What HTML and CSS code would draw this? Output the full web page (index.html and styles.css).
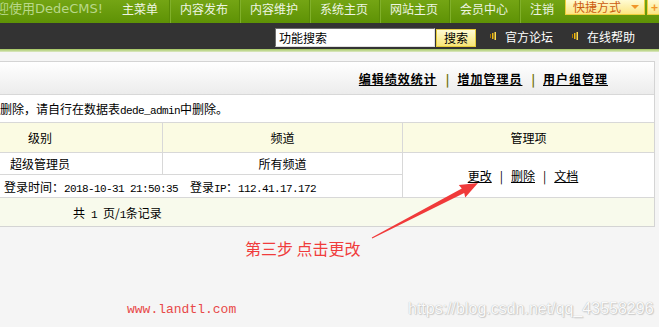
FILE: index.html
```html
<!DOCTYPE html>
<html lang="zh-CN">
<head>
    <meta charset="UTF-8">
    <title>DedeCMS 管理员</title>
    <link rel="stylesheet" href="styles.css">
</head>
<body>
    <div class="topbar">
        <div class="welcome">欢迎使用DedeCMS!</div>
        <ul class="menu">
            <li>主菜单</li>
            <li>内容发布</li>
            <li>内容维护</li>
            <li>系统主页</li>
            <li>网站主页</li>
            <li>会员中心</li>
            <li>注销</li>
        </ul>
        <div class="quick">快捷方式<span class="caret"></span></div>
        <div class="quick plus">+</div>
    </div>
    <div class="toolbar">
        <input class="search-input" type="text" value="功能搜索">
        <button class="search-btn">搜索</button>
        <a class="tool first">
            <svg width="6" height="8" viewBox="0 0 6 8"><rect x="0" y="2" width="1" height="4" fill="#b07a00"/><rect x="2" y="1" width="1.5" height="6" fill="#f0b90c"/><rect x="4.5" y="0" width="1.5" height="8" fill="#ffd94a"/></svg>
            官方论坛
        </a>
        <a class="tool">
            <svg width="6" height="8" viewBox="0 0 6 8"><rect x="0" y="2" width="1" height="4" fill="#b07a00"/><rect x="2" y="1" width="1.5" height="6" fill="#f0b90c"/><rect x="4.5" y="0" width="1.5" height="8" fill="#ffd94a"/></svg>
            在线帮助
        </a>
    </div>
    <div class="stripe"></div>

    <div class="panel">
        <div class="panel-head">
            <a class="head-link">编辑绩效统计</a>
            <span class="head-sep">|</span>
            <a class="head-link">增加管理员</a>
            <span class="head-sep">|</span>
            <a class="head-link">用户组管理</a>
        </div>
        <div class="notice">删除，请自行在数据表<span class="mono">dede_admin</span>中删除。</div>
        <table class="list">
            <colgroup>
                <col class="c1">
                <col class="c2">
                <col class="c3">
            </colgroup>
            <tr class="head-row">
                <td>级别</td>
                <td class="bl">频道</td>
                <td class="bl">管理项</td>
            </tr>
            <tr class="row1">
                <td>超级管理员</td>
                <td class="bl">所有频道</td>
                <td class="bl ops" rowspan="2">
                    <a>更改</a><span class="op-sep">|</span><a>删除</a><span class="op-sep">|</span><a>文档</a>
                </td>
            </tr>
            <tr class="row2">
                <td colspan="2">登录时间：<span class="mono">2018-10-31 21:50:35  </span>登录<span class="mono">IP</span>：<span class="mono">112.41.17.172</span></td>
            </tr>
            <tr class="foot-row">
                <td colspan="3">共<span class="mono"> 1 </span>页/<span class="mono">1</span>条记录</td>
            </tr>
        </table>
    </div>

    <svg class="arrow" width="659" height="327" viewBox="0 0 659 327">
        <polygon points="371.8,237.6 461.8,188.6 458.8,185.1 478,183 465.2,197.5 464.2,193 372.2,238.4" fill="#f03a3a"/>
    </svg>
    <div class="note">第三步 点击更改</div>
    <div class="site">www.landtl.com</div>
    <div class="mark">https://blog.csdn.net/qq_43558296</div>
</body>
</html>
```

FILE: styles.css
```css
body {
    margin: 0;
    background: #f5f5f5;
    font-family: "Noto Sans CJK SC", sans-serif;
    font-size: 12px;
    color: #000;
    position: relative;
    height: 327px;
    overflow: hidden;
}
.mono {
    font-family: "Liberation Mono", monospace;
    font-size: 11px;
    letter-spacing: -0.6px;
    white-space: pre;
}

/* top green menu */
.topbar {
    display: flex;
    height: 23px;
    background: linear-gradient(#74a514, #5e9205);
    white-space: nowrap;
    overflow: hidden;
}
.welcome {
    flex: none;
    width: 129px;
    margin-left: -17px;
    font-family: "DejaVu Sans", "Noto Sans CJK SC", sans-serif;
    font-size: 13px;
    line-height: 17px;
    color: #b9d88a;
}
.menu {
    display: flex;
    list-style: none;
    margin: 0;
    padding: 0;
}
.menu li {
    padding: 0 11px 0 10px;
    line-height: 17px;
    color: #eef5e2;
    border-left: 1px solid #5a8b06;
    box-shadow: inset 1px 0 #80b02a;
}
.menu li:first-child {
    border-left: none;
    box-shadow: none;
}
.quick {
    flex: none;
    display: flex;
    align-items: center;
    width: 71px;
    height: 14px;
    padding-left: 7px;
    border: 1px solid #efcf3c;
    border-top: none;
    background: linear-gradient(#fffbd3, #fbe582);
    color: #cc5c10;
    line-height: 14px;
}
.caret {
    margin-left: 10px;
    border-left: 4px solid transparent;
    border-right: 4px solid transparent;
    border-top: 4px solid #f0962a;
}
.plus {
    width: 20px;
    margin-left: 2px;
    padding-left: 3px;
    font-weight: bold;
    color: #f0962a;
}

/* dark search bar */
.toolbar {
    display: flex;
    align-items: flex-start;
    height: 26px;
    padding: 0 0 0 275px;
    background: #333333;
    white-space: nowrap;
}
.search-input {
    box-sizing: border-box;
    width: 160px;
    height: 19px;
    margin: 5px 0 0 0;
    padding: 0 3px;
    border: 1px solid #9a9a9a;
    border-color: #6f6f6f #e0e0e0 #e0e0e0 #6f6f6f;
    font-family: "Noto Sans CJK SC", sans-serif;
    font-size: 12px;
    color: #000;
    background: #fff;
}
.search-btn {
    box-sizing: border-box;
    width: 40px;
    height: 18px;
    margin: 6px 0 0 1px;
    padding: 0;
    border: 1px solid #e6cc3a;
    background: linear-gradient(#fffbd4, #f7e577);
    font-family: "Noto Sans CJK SC", sans-serif;
    font-size: 12px;
    line-height: 16px;
    color: #000;
}
.tool {
    display: flex;
    align-items: center;
    gap: 9px;
    height: 26px;
    margin-left: 19px;
    color: #fff;
}
.tool.first {
    margin-left: 14px;
}
.stripe {
    height: 3px;
    background: linear-gradient(#a1c55c, #dde9c4);
}

/* admin panel */
.panel {
    margin: 9px 4px 0 -83px;
    border: 1px solid #d4d4d4;
    background: #fff;
}
.panel-head {
    display: flex;
    justify-content: flex-end;
    align-items: center;
    height: 32px;
    padding-right: 46px;
    border-bottom: 1px solid #d8d8d8;
    background: linear-gradient(#ffffff, #ececec);
}
.head-link {
    font-weight: bold;
    letter-spacing: 1px;
    text-decoration: underline;
    color: #000;
}
.head-sep {
    margin: 0 8px 0 9px;
    font-weight: bold;
    color: #6b6b00;
}
.notice {
    height: 27px;
    line-height: 27px;
    padding-left: 82px;
    border-bottom: 1px solid #d8d8d8;
    white-space: nowrap;
}
.list {
    width: 100%;
    table-layout: fixed;
    border-collapse: separate;
    border-spacing: 0;
}
.c1 { width: 244px; }
.c2 { width: 240px; }
.c3 { width: 252px; }
.list td {
    padding: 0;
    text-align: center;
    border-bottom: 1px solid #d8d8d8;
    white-space: nowrap;
}
.list td.bl {
    border-left: 1px solid #d8d8d8;
}
.head-row td {
    height: 29px;
    background: #fbfbe3;
}
.row1 td {
    height: 21px;
}
.row2 td {
    height: 22px;
}
.ops {
    padding-right: 11px !important;
}
.ops a {
    text-decoration: underline;
    color: #000;
}
.op-sep {
    margin: 0 8px;
}
.foot-row td {
    height: 28px;
    text-align: left;
    padding-left: 155px;
    border-bottom: none;
    background: #f8faec;
}

/* annotations over the screenshot */
.arrow {
    position: absolute;
    left: 0;
    top: 0;
    pointer-events: none;
}
.note {
    position: absolute;
    left: 245px;
    top: 237px;
    font-size: 16px;
    line-height: 22px;
    color: #f03c3c;
    white-space: nowrap;
}
.site {
    position: absolute;
    left: 127px;
    top: 302px;
    font-family: "Liberation Mono", monospace;
    font-size: 13px;
    color: #e84848;
}
.mark {
    position: absolute;
    left: 408px;
    top: 300px;
    font-family: "Liberation Sans", sans-serif;
    font-size: 16px;
    color: #fafafa;
    text-shadow: 0 0 1px #a8a8a8, 1px 1px 1px #cfcfcf;
    white-space: nowrap;
}
```
